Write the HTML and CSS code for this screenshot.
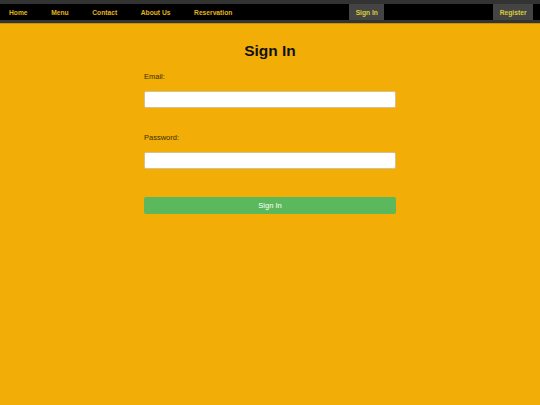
FILE: index.html
```html
<!DOCTYPE html>
<html lang="en">
<head>
<meta charset="utf-8">
<title>Sign In</title>
<link rel="stylesheet" href="styles.css">
</head>
<body>
<nav class="topnav">
  <div class="links">
    <a class="nav-link first" href="#">Home</a>
    <a class="nav-link" href="#">Menu</a>
    <a class="nav-link" href="#">Contact</a>
    <a class="nav-link" href="#">About Us</a>
    <a class="nav-link" href="#">Reservation</a>
  </div>
  <a class="nav-btn signin" href="#">Sign In</a>
  <a class="nav-btn register" href="#">Register</a>
</nav>
<main class="form-wrap">
  <h1 class="title">Sign In</h1>
  <form class="form">
    <label class="label" for="email">Email:</label>
    <input class="field" id="email" type="email">
    <label class="label pw" for="password">Password:</label>
    <input class="field" id="password" type="password">
    <button class="submit" type="button">Sign In</button>
  </form>
</main>
</body>
</html>
```
FILE: styles.css
```css
html, body {
  margin: 0;
  padding: 0;
}
body {
  background: #f2ae06;
  font-family: "Liberation Sans", Arial, sans-serif;
  width: 540px;
  height: 405px;
  overflow: hidden;
}
.topnav {
  display: flex;
  align-items: stretch;
  height: 16px;
  background: #000;
  border-top: 4px solid #333;
  border-bottom: 3px solid #333;
  box-shadow: 0 1px 0 #c8900a;
}
.links {
  display: flex;
}
.nav-link {
  display: flex;
  align-items: center;
  padding: 0 11.8px;
  font-size: 6.7px;
  font-weight: bold;
  color: #e0b51c;
  text-decoration: none;
}
.nav-link.first {
  padding-left: 9px;
}
.nav-btn {
  display: flex;
  align-items: center;
  padding: 0 6.5px;
  background: #444;
  font-size: 6.7px;
  font-weight: bold;
  color: #d9cf3a;
  text-decoration: none;
}
.signin {
  margin-left: 105px;
}
.register {
  margin-left: auto;
  margin-right: 7px;
}
.form-wrap {
  width: 252px;
  margin: 0 auto;
  padding-top: 18px;
}
.title {
  margin: 0;
  text-align: center;
  font-size: 15.5px;
  line-height: 20px;
  font-weight: bold;
  color: #111;
}
.form {
  display: flex;
  flex-direction: column;
}
.label {
  margin-top: 11px;
  font-size: 7.5px;
  line-height: 10px;
  color: #3a2c05;
}
.label.pw {
  margin-top: 25px;
}
.field {
  box-sizing: border-box;
  margin: 9px 0 0;
  height: 17px;
  width: 100%;
  background: #fff;
  border: 1px solid #d9c08a;
  border-radius: 2px;
  padding: 0 4px;
  font-size: 7px;
}
.submit {
  box-sizing: border-box;
  margin-top: 28px;
  height: 17px;
  width: 100%;
  background: #5cb85c;
  border: none;
  border-radius: 2px;
  color: #fff;
  font-family: "Liberation Sans", Arial, sans-serif;
  font-size: 7.5px;
}
```
